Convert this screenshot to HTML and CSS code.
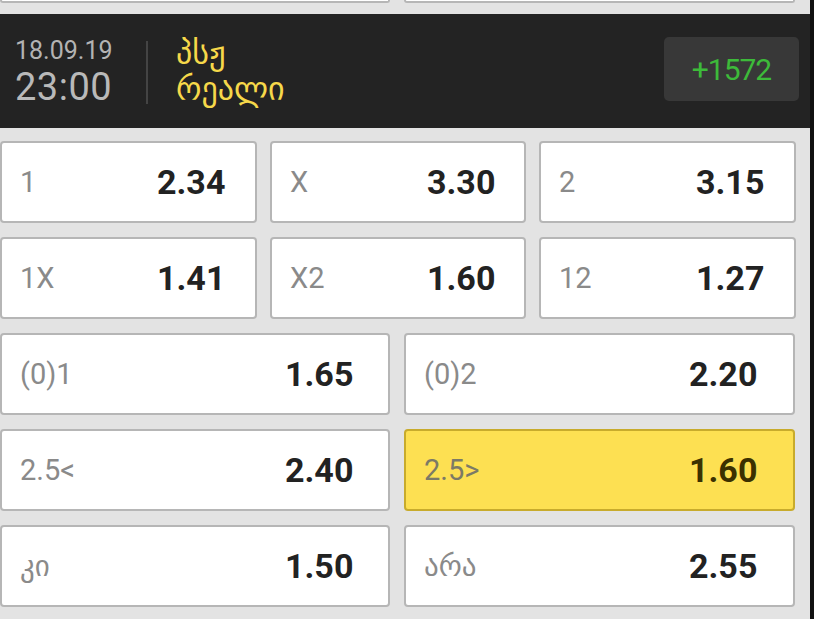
FILE: index.html
```html
<!DOCTYPE html>
<html lang="ka">
<head>
<meta charset="utf-8">
<title>პსჟ - რეალი</title>
<link rel="stylesheet" href="styles.css">
</head>
<body>
<div class="page">
  <div class="row row-2 prev">
    <div class="cell cell-stub"></div>
    <div class="cell cell-stub"></div>
  </div>

  <header class="match">
    <div class="when">
      <div class="date">18.09.19</div>
      <div class="time">23:00</div>
    </div>
    <div class="divider"></div>
    <div class="teams">
      <div class="team">პსჟ</div>
      <div class="team">რეალი</div>
    </div>
    <div class="more">+1572</div>
  </header>

  <div class="row row-3">
    <div class="cell"><span class="label">1</span><span class="odd">2.34</span></div>
    <div class="cell"><span class="label">X</span><span class="odd">3.30</span></div>
    <div class="cell"><span class="label">2</span><span class="odd">3.15</span></div>
  </div>
  <div class="row row-3">
    <div class="cell"><span class="label">1X</span><span class="odd">1.41</span></div>
    <div class="cell"><span class="label">X2</span><span class="odd">1.60</span></div>
    <div class="cell"><span class="label">12</span><span class="odd">1.27</span></div>
  </div>
  <div class="row row-2">
    <div class="cell"><span class="label">(0)1</span><span class="odd">1.65</span></div>
    <div class="cell"><span class="label">(0)2</span><span class="odd">2.20</span></div>
  </div>
  <div class="row row-2">
    <div class="cell"><span class="label">2.5&lt;</span><span class="odd">2.40</span></div>
    <div class="cell cell-active"><span class="label">2.5&gt;</span><span class="odd">1.60</span></div>
  </div>
  <div class="row row-2">
    <div class="cell"><span class="label">კი</span><span class="odd">1.50</span></div>
    <div class="cell"><span class="label">არა</span><span class="odd">2.55</span></div>
  </div>
</div>
</body>
</html>
```

FILE: styles.css
```css
* {
  box-sizing: border-box;
}

html, body {
  margin: 0;
  padding: 0;
}

body {
  background: #111111;
  width: 814px;
  height: 619px;
  overflow: hidden;
  font-family: Roboto, "DejaVu Sans", sans-serif;
}

.page {
  width: 810px;
  height: 619px;
  background: #e3e3e3;
  overflow: hidden;
}

.row {
  display: grid;
  margin-bottom: 14px;
}

.row-3 {
  grid-template-columns: 257px 256px 257px;
  column-gap: 13px;
}

.row-2 {
  grid-template-columns: 390px 391px;
  column-gap: 14px;
}

.prev {
  margin-bottom: 11px;
}

.cell {
  height: 82px;
  background: #ffffff;
  border: 2px solid #b6b6b6;
  border-radius: 4px;
  display: grid;
  grid-template-columns: 137px auto;
  align-items: center;
  padding-left: 18px;
}

.row-2 .cell {
  grid-template-columns: 265px auto;
}

.cell-stub {
  height: 3px;
  border-top: 0;
  border-radius: 0 0 4px 4px;
}

.label {
  font-size: 29px;
  color: #8a8a8a;
  font-weight: 400;
}

.odd {
  font-size: 34px;
  font-weight: 700;
  color: #222222;
}

.cell-active {
  background: #fde052;
  border-color: #c8ab2c;
}

.cell-active .label {
  color: #7c7a66;
}

.cell-active .odd {
  color: #3b3100;
}

.match {
  height: 114px;
  background: #232323;
  display: flex;
  align-items: center;
  padding: 0 11px 0 15px;
  margin-bottom: 13px;
}

.when {
  width: 131px;
  display: flex;
  flex-direction: column;
  margin-top: 4px;
}

.date {
  font-size: 25px;
  line-height: 28px;
  color: #b3b3b3;
}

.time {
  font-size: 38px;
  line-height: 44px;
  color: #b9b9b9;
  letter-spacing: 0.5px;
}

.divider {
  width: 2px;
  height: 63px;
  background: #444444;
  margin-top: 2px;
}

.teams {
  flex: 1;
  padding-left: 28px;
  display: flex;
  flex-direction: column;
  gap: 4px;
}

.team {
  font-size: 32px;
  line-height: 32px;
  font-weight: 400;
  color: #f6d84a;
}

.more {
  width: 135px;
  height: 64px;
  margin-top: -4px;
  background: #383838;
  border-radius: 5px;
  display: flex;
  align-items: center;
  justify-content: center;
  font-size: 30px;
  color: #3dba3a;
  letter-spacing: -1px;
}
```
